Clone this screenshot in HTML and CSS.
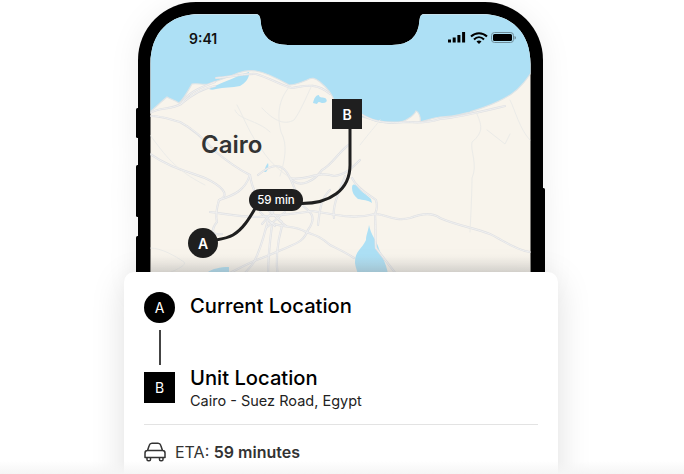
FILE: index.html
```html
<!DOCTYPE html>
<html lang="en">
<head>
<meta charset="utf-8">
<title>Route</title>
<link rel="stylesheet" href="styles.css">
</head>
<body>
<main class="stage">
  <svg class="phone" viewBox="130 0 424 290" width="424" height="290" aria-hidden="true">
    <defs>
      <clipPath id="screen"><path d="M200 14H256Q260 14 260.500 20Q262 45 288 45H392Q418 45 419.500 20Q420 14 424 14H481C512 14 530.500 33 530.500 64V300H150.500V64C150.500 33 169 14 200 14Z"/></clipPath>
      <linearGradient id="shade" x1="0" y1="0" x2="0" y2="1"><stop offset="0" stop-color="#bbb" stop-opacity="0"/><stop offset="1" stop-color="#999" stop-opacity=".38"/></linearGradient>
      <g id="roads">
        <path d="M150 116C165 116 170 120 180 122C195 130 205 140 216 152C228 162 240 170 250 175C252 190 258 200 269 207C273 215 280 222 286 226"/>
        <path d="M150 113C160 107 170 110 181 104C195 92 205 88 215 86"/>
        <path d="M216 78C230 77 248 73 256 74C270 78 282 86 292 88C305 86 316 82 330 94"/>
        <path d="M250 175C245 190 235 195 219 200C217 207 215 215 217 222C212 228 210 236 222 234"/>
        <path d="M258 175C270 165 282 160 290 178C305 182 318 170 334 176C345 175 352 168 360 160"/>
        <path d="M290 178C296 190 298 200 302 205C310 212 318 216 308 230C304 240 300 242 286 248C276 252 270 255 262 258C250 262 240 268 226 275"/>
        <path d="M210 212C225 214 240 217 258 217C274 215 290 215 312 211C335 214 350 220 375 214C376 230 375 240 376 248"/>
        <path d="M270 222C280 228 296 225 306 232C318 236 322 238 330 245C340 250 345 252 354 258"/>
        <path d="M375 214C385 214 395 222 410 218C420 214 432 212 440 218C455 225 475 228 490 234C503 240 515 250 530 252"/>
        <path d="M352 178C358 190 370 195 376 200C378 207 376 212 375 214M376 248C382 256 390 266 396 274"/>
        <path d="M268 220C264 235 262 246 254 262C250 268 246 272 240 278M272 225C270 240 268 255 268 278M282 226C278 240 275 258 278 278"/>
        <path d="M260 212L275 226M268 210L282 222M276 208L262 224M285 212L266 228"/>
        <path d="M150 154C170 168 190 172 205 178C220 185 232 195 219 200"/>
        <path d="M330 190C320 200 320 210 318 225M345 176C340 190 332 205 334 218"/>
        <path d="M290 178C300 190 315 180 322 170C332 165 340 150 350 144"/>
        <path d="M355 110C370 122 385 124 406 122C416 122 424 124 440 119C460 117 480 112 505 106"/>
        <path d="M181 104C188 92 200 88 215 82"/>
      </g>
    </defs>
    <rect x="136" y="108" width="4" height="30" rx="1.500" fill="#000"/>
    <rect x="136" y="165" width="4" height="52" rx="1.500" fill="#000"/>
    <rect x="136" y="236" width="4" height="52" rx="1.500" fill="#000"/>
    <rect x="541" y="188" width="4" height="90" rx="1.500" fill="#000"/>
    <rect x="138" y="2" width="405" height="400" rx="58" fill="#000"/>
    <g clip-path="url(#screen)">
      <rect x="150" y="14" width="381" height="280" fill="#f8f4ec"/>
      <path fill="#ade0f5" stroke="#dfe4e6" stroke-width="1.200" d="M150 14H531V73C521 88 512 95 503 99C492 105 482 108 470 112C458 115 452 117 440 117C432 118 426 121 420 122C421 118 419 112 416 111C414 116 409 118 406 120C398 124 385 124 375 121C368 118 362 117 356 116L334 100C331 92 326 87 320 82C315 78 312 77 307 80C300 83 295 85 289 85C280 80 268 73 256 71C250 70 244 71 238 73C228 77 217 81 209 84C203 85 197 83 192 84C188 91 184 99 179 103C175 100 170 99 167 97C162 101 157 106 150 112Z"/>
      <path fill="#ade0f5" d="M209 89C215 85 228 81 240 75L249 72C250 77 246 83 240 86C232 88 224 87 216 89C213 90 211 90 209 89ZM313 103C314 98 316 95 319 95C319 98 322 97 325 98C328 100 327 103 323 103C320 103 319 100 317 104ZM264 172C265 168 266 165 268 163C269 166 268 170 266 172ZM352 188C352 183 355 184 358 187C361 192 366 194 371 199L372 203C368 200 363 200 358 199C354 196 352 192 352 188ZM355 262C355 251 362 249 366 240C366 235 368 232 369 225C371 235 376 240 378 246C380 253 386 262 388 274H358C356 268 355 265 355 262ZM208 272C212 269 220 267 229 267V274H208Z"/>
      <g class="road-outer"><use href="#roads"/></g>
      <g class="road-inner"><use href="#roads"/></g>
      <g class="road-thin">
        <path d="M476 112C482 125 484 132 472 142C470 150 478 165 472 178C472 190 471 212 470 232"/>
        <path d="M510 134L505 144L487 130"/>
        <path d="M235 110C238 120 258 120 270 132M312 85C305 100 300 112 294 120C285 125 275 122 262 108"/>
        <path d="M360 145C370 132 374 128 380 120M510 100C515 110 520 130 530 140"/>
        <path d="M290 86C278 100 277 115 281 132C288 145 285 160 280 176"/>
        <path d="M237 105C245 120 250 135 262 150C272 165 280 170 290 178"/>
        <path d="M150 135C165 155 175 170 205 185M150 248C162 248 175 256 184 262C188 266 170 272 158 278"/>
      </g>
      <rect x="150" y="255" width="381" height="20" fill="url(#shade)"/>
      <path d="M350 125V165C350 190 330 204 300 203.500" fill="none" stroke="#1f1f1f" stroke-width="3"/>
      <path d="M216 240C222 239 228 238 233 235C243 229 249 219 256 207" fill="none" stroke="#1f1f1f" stroke-width="3"/>
      <path d="M448 42.500v-3h3v3zM452.700 42.500v-5h3v5zM457.400 42.500v-7.500h3v7.500zM462.100 42.500v-10.500h3v10.500z" fill="#000"/>
      <path d="M471 36.500C475.500 32 482.500 32 487 36.500M474 39.500C477 36.500 481 36.500 484 39.500" fill="none" stroke="#000" stroke-width="2"/>
      <path d="M476.500 41.600C478 40.200 480 40.200 481.500 41.600L479 44Z" fill="#000"/>
      <rect x="491.500" y="32.500" width="22" height="10" rx="3" fill="none" stroke="#6f8c99" stroke-width="1"/>
      <rect x="493" y="34" width="19" height="7" rx="1.500" fill="#000"/>
      <path d="M514.500 36v3.500c1-.3 1.500-1 1.500-1.700s-.5-1.500-1.500-1.800z" fill="#6f8c99"/>
    </g>
  </svg>

  <span class="status-time">9:41</span>
  <span class="map-city">Cairo</span>
  <span class="pin pin-square pin-b">B</span>
  <span class="pin pin-round pin-a">A</span>
  <span class="duration">59 min</span>

  <section class="card">
    <div class="stop">
      <span class="marker marker-round">A</span>
      <h2 class="stop-title">Current Location</h2>
    </div>
    <div class="connector"></div>
    <div class="stop">
      <span class="marker">B</span>
      <div class="stop-text">
        <h2 class="stop-title">Unit Location</h2>
        <p class="stop-sub">Cairo - Suez Road, Egypt</p>
      </div>
    </div>
    <hr class="divider">
    <div class="eta">
      <svg class="car" viewBox="0 0 22 20" width="22" height="20" aria-hidden="true">
        <path d="M3.500 8.500L5.300 3.200C5.700 1.800 6.800 1.200 8 1.200H14C15.200 1.200 16.300 1.800 16.700 3.200L18.500 8.500M3.500 8.500H18.500C20 8.500 21 9.800 21 11V15.500H1V11C1 9.800 2 8.500 3.500 8.500ZM3 15.500V17.500C3 18.300 3.500 18.800 4.300 18.800H5.200C6 18.800 6.500 18.300 6.500 17.500V15.500M15.500 15.500V17.500C15.500 18.300 16 18.800 16.800 18.800H17.700C18.500 18.800 19 18.300 19 17.500V15.500" fill="none" stroke="#333" stroke-width="1.500" stroke-linejoin="round"/>
      </svg>
      <p class="eta-text">ETA: <strong>59 minutes</strong></p>
    </div>
  </section>
  <div class="fade"></div>
</main>
</body>
</html>
```
FILE: styles.css
```css
* { box-sizing: border-box; }
html, body { margin: 0; background: #fff; }
body { font-family: "Inter", "Liberation Sans", sans-serif; color: #000; }
.stage { position: relative; width: 684px; height: 474px; overflow: hidden; }
.phone { position: absolute; left: 130px; top: 0; filter: drop-shadow(0 4px 14px rgba(0,0,0,.07)); }
.road-outer, .road-inner, .road-thin { fill: none; stroke-linejoin: round; stroke-linecap: round; }
.road-outer { stroke: #e0e1e3; stroke-width: 2.200px; }
.road-inner { stroke: #f1f1f0; stroke-width: .9px; }
.road-thin { stroke: #ebebe8; stroke-width: 1px; }
.status-time { position: absolute; left: 189px; top: 30px; font-size: 14px; line-height: 17px; font-weight: 600; color: #111; }
.map-city { position: absolute; left: 201px; top: 130px; font-size: 24px; line-height: 30px; font-weight: 600; color: #333; }
.pin { position: absolute; display: flex; align-items: center; justify-content: center; width: 30px; height: 30px; background: #1f1f1f; color: #fff; font-size: 14px; font-weight: 600; }
.pin-b { left: 332px; top: 99px; }
.pin-a { left: 188px; top: 228px; border-radius: 50%; }
.duration { position: absolute; left: 249px; top: 189px; width: 54px; height: 22px; border-radius: 11px; background: #1f1f1f; color: #fff; font-size: 11.500px; font-weight: 500; line-height: 22px; text-align: center; }
.card { position: absolute; left: 124px; top: 272px; width: 434px; height: 230px; padding: 20px 20px 0; background: #fff; border-radius: 10px; box-shadow: 0 8px 34px rgba(0,0,0,.13); }
.stop { display: flex; gap: 15px; align-items: flex-start; }
.marker { flex: none; display: flex; align-items: center; justify-content: center; width: 31px; height: 31px; background: #000; color: #fff; font-size: 14px; font-weight: 400; }
.marker-round { border-radius: 50%; }
.connector { width: 2px; height: 35px; margin: 7px 0 7px 15px; background: #444; }
.stop-title { margin: 0; font-size: 20.200px; line-height: 28px; font-weight: 500; }
.stop-text { display: flex; flex-direction: column; margin-top: -8px; }
.stop-sub { margin: 0; font-size: 14.500px; line-height: 18px; color: #222; }
.divider { margin: 14px 0 0; height: 1px; border: 0; background: #e3e3e3; width: 394px; }
.eta { display: flex; align-items: center; gap: 9px; margin-top: 17px; }
.car { flex: none; }
.eta-text { margin: 0; font-size: 16px; line-height: 20px; color: #333; }
.eta-text strong { font-weight: 600; }
.fade { position: absolute; left: 0; right: 0; bottom: 0; height: 13px; background: linear-gradient(rgba(245,245,245,0), rgba(245,245,245,1)); }
```
